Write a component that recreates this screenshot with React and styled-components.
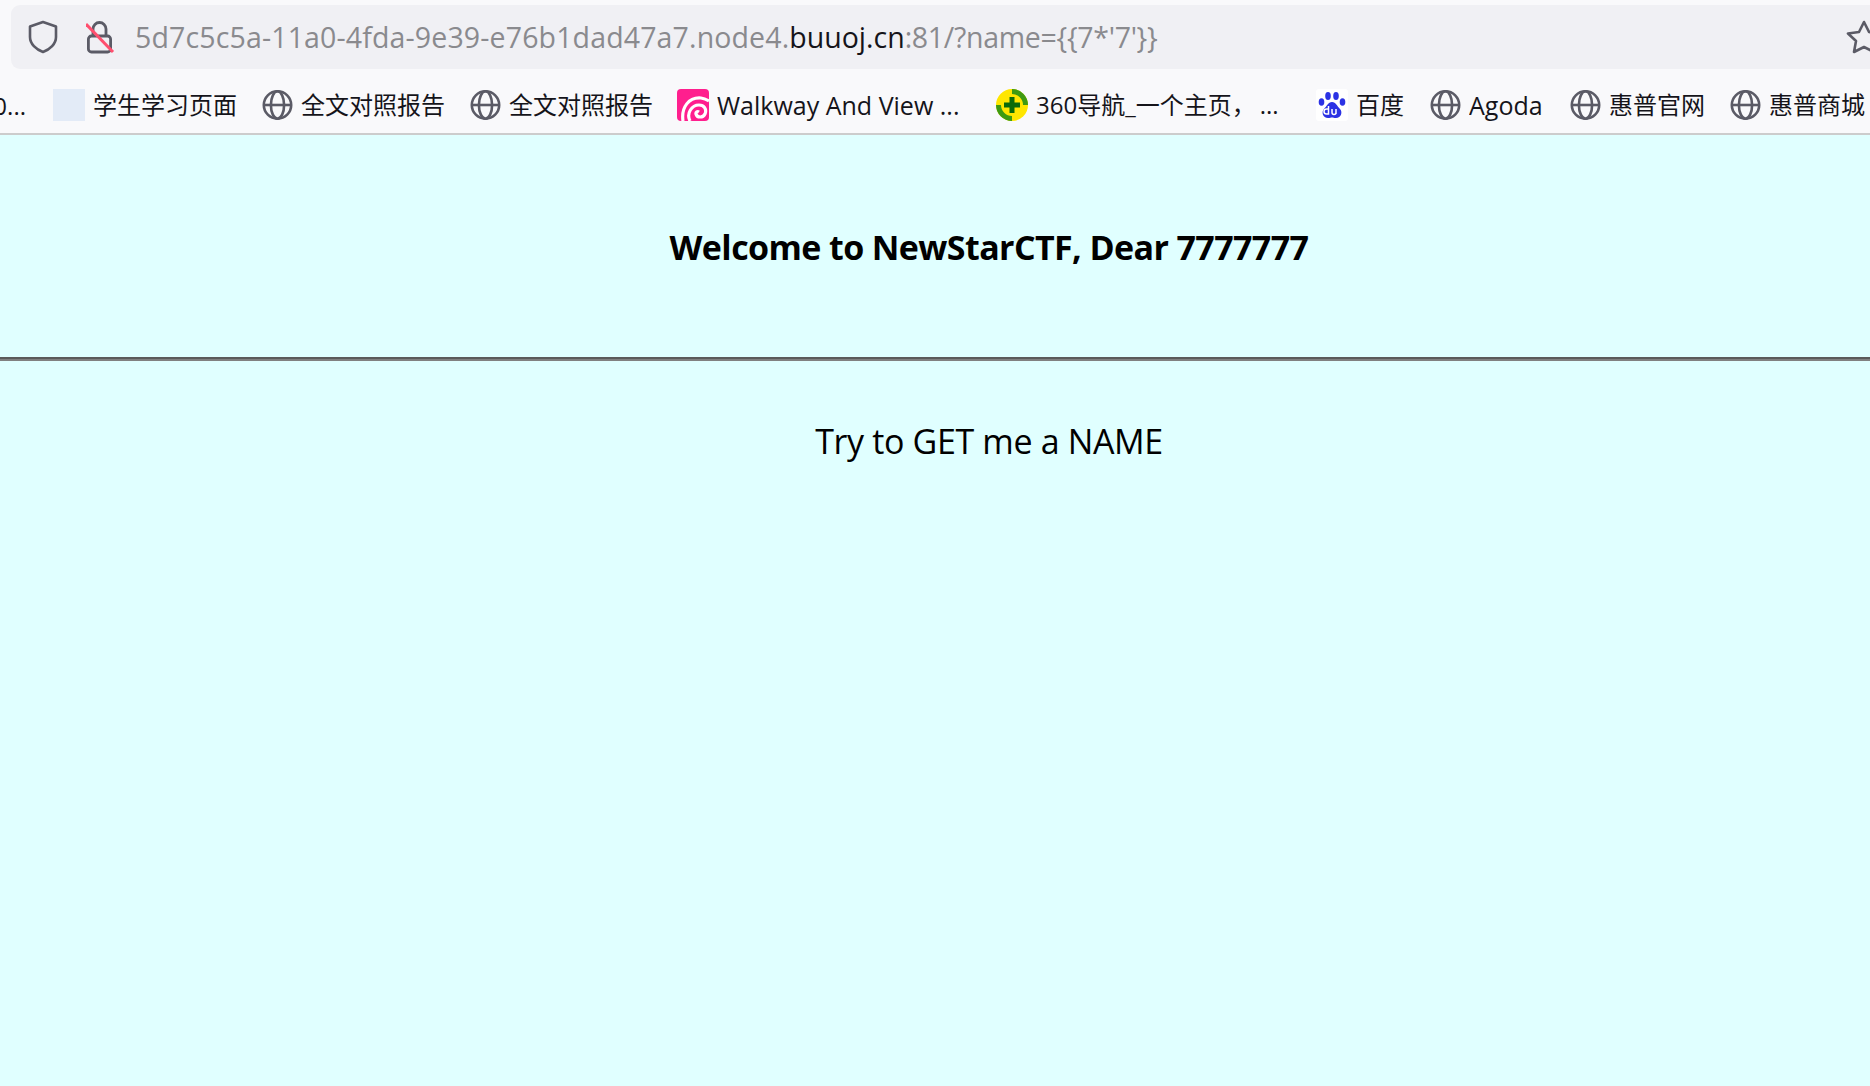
import React from "react";
import styled, { createGlobalStyle } from "styled-components";

const Global = createGlobalStyle`
  html, body { margin: 0; padding: 0; height: 100%; overflow: hidden; background: #e0ffff; }
  #root { height: 1086px; width: 1870px; overflow: hidden; }
  * { box-sizing: border-box; }
`;

const Page = styled.div`
  display: flex; flex-direction: column; height: 1086px; width: 1870px;
  font-family: "Open Sans", "Noto Sans CJK SC", sans-serif;
`;
const Chrome = styled.header`
  background: #f9f9fb; height: 135px; border-bottom: 2px solid #ccc;
  padding-top: 5px; display: flex; flex-direction: column; overflow: hidden;
`;
const UrlBar = styled.div`
  height: 64px; margin-left: 11px; background: #f0f0f4; border-radius: 9px 0 0 9px;
  display: flex; align-items: center; padding-left: 16px; position: relative;
`;
const LockSlot = styled.span`display: flex; margin-left: 27px; margin-right: 19px;`;
const Url = styled.div`
  font-size: 28.5px; color: #8a8a8e; white-space: nowrap; font-family: "Open Sans", sans-serif;
`;
const UrlPart = styled.span`
  letter-spacing: ${p => p.$ls}px;
  color: ${p => (p.$host ? "#15141a" : "#8a8a8e")};
`;
const StarSlot = styled.span`position: absolute; left: 1835px; top: 15px; display: flex;`;
const Bookmarks = styled.nav`
  height: 32px; margin-top: 20px; display: flex; align-items: center; gap: 24px;
`;
const Overflowed = styled.span`
  width: 29px; padding-right: 3px; display: flex; justify-content: flex-end; font-size: 24px; color: #15141a; overflow: hidden; white-space: nowrap;
`;
const Item = styled.div`display: flex; align-items: center; gap: 8px; white-space: nowrap; flex: none;`;
const Label = styled.span`
  font-size: ${p => p.$size || 24}px; line-height: 32px; color: #15141a; width: ${p => p.$w}px; overflow: hidden; white-space: nowrap;
`;
const Square = styled.span`width: 32px; height: 32px; background: #e3ebf7; flex: none;`;
const Main = styled.main`flex: 1; background: #e0ffff; display: flex; flex-direction: column; color: #000;`;
const Heading = styled.h1`
  margin: 0; height: 222px; padding: 89px 0 0 108px; text-align: center; font-size: 34px; line-height: 46px; font-weight: 700;
  letter-spacing: -0.6px;
`;
const Rule = styled.hr`
  margin: 0; height: 4px; border: 0; border-top: 2px solid #5a5a5a; border-bottom: 2px solid #808080;
`;
const Message = styled.p`
  margin: 0; padding: 57px 0 0 108px; text-align: center; font-size: 34px; line-height: 46px; letter-spacing: -0.36px;
`;

const Globe = () => (
  <svg width="32" height="32" viewBox="0 0 32 32" fill="none" stroke="#5b5b66" strokeWidth="2.6">
    <circle cx="16.500" cy="16" r="13.700" />
    <ellipse cx="16.500" cy="16" rx="6.600" ry="13.700" />
    <path d="M2.800 16h27.400" />
  </svg>
);
const Shield = () => (
  <svg width="32" height="34" viewBox="0 0 32 34" fill="none" stroke="#5b5b66" strokeWidth="2.6" strokeLinejoin="round">
    <path d="M16 2 L29 6.5 V17 C29 24 23 29.5 16 32 C9 29.5 3 24 3 17 V6.5 Z" />
  </svg>
);
const Lock = () => (
  <svg width="30" height="34" viewBox="0 0 30 34" fill="none">
    <rect x="2.400" y="16" width="22.200" height="16" rx="3" stroke="#5b5b66" strokeWidth="2.800" />
    <path d="M7 16V9a6.500 6.500 0 0 1 13 0v7" stroke="#5b5b66" strokeWidth="2.800" />
    <path d="M0 4 L27 32" stroke="#ff4f6e" strokeWidth="3" />
  </svg>
);
const Star = () => (
  <svg width="36" height="34" viewBox="0 0 36 34" fill="none" stroke="#5b5b66" strokeWidth="2.6" strokeLinejoin="round">
    <path d="M18 2 L23 12 L34 13.5 L26 21 L28 32 L18 27 L8 32 L10 21 L2 13.5 L13 12 Z" />
  </svg>
);
const Spiral = () => (
  <svg width="32" height="32" viewBox="0 0 32 32">
    <rect width="32" height="32" rx="4" fill="#ff1f8e" />
    <path d="M6 32 C4 18 12 8 24 9 C28 9.500 32 12 32 12 M13 32 C9 24 15 16 22 16 C27 16 30 20 28 25 C26 29 20 29 19 25 C18.500 23 20.500 22 22 23" fill="none" stroke="#fff" strokeWidth="3.200" />
  </svg>
);
const Nav360 = () => (
  <svg width="32" height="32" viewBox="0 0 32 32">
    <circle cx="16" cy="16" r="16" fill="#ffe600" />
    <path d="M16 0a16 16 0 0 1 16 16h-5a11 11 0 0 0-11-11Z" fill="#3e9a12" />
    <path d="M16 32a16 16 0 0 1-16-16h5a11 11 0 0 0 11 11Z" fill="#3e9a12" />
    <path d="M13.500 8h5v5.500h5.500v5h-5.500V24h-5v-5.500H8v-5h5.500Z" fill="#0a6a0a" />
  </svg>
);
const Baidu = () => (
  <svg width="32" height="32" viewBox="0 0 32 32" fill="#2b32e4">
    <rect width="32" height="32" rx="3" fill="#fff" />
    <ellipse cx="5.500" cy="13" rx="2.800" ry="3.800" />
    <ellipse cx="12" cy="7" rx="2.800" ry="4" />
    <ellipse cx="20" cy="7" rx="2.800" ry="4" />
    <ellipse cx="26.500" cy="13" rx="2.800" ry="3.800" />
    <path d="M16 13c-4 0-5 4-8 7-3 3-1 9 4 9 2 0 3-.6 4-.6s2 .6 4 .6c5 0 7-6 4-9-3-3-4-7-8-7Z" />
    <path d="M12.500 17v8h-2a2.500 2.500 0 0 1 0-5h2M16 20v3.500a2 2 0 0 0 4 0V20M20 20v5" fill="none" stroke="#fff" strokeWidth="1.500" />
  </svg>
);

const Bookmark = ({ icon, w, size, children }) => (
  <Item>{icon}<Label $w={w} $size={size}>{children}</Label></Item>
);

export default function App() {
  return (
    <Page>
      <Global />
      <Chrome>
        <UrlBar>
          <Shield />
          <LockSlot><Lock /></LockSlot>
          <Url>
            <UrlPart $ls={0.14}>5d7c5c5a-11a0-4fda-9e39-e76b1dad47a7.node4.</UrlPart>
            <UrlPart $ls={0} $host>buuoj.cn</UrlPart>
            <UrlPart $ls={-0.3}>:81/?name={"{{7*'7'}}"}</UrlPart>
          </Url>
          <StarSlot><Star /></StarSlot>
        </UrlBar>
        <Bookmarks>
          <Overflowed>0...</Overflowed>
          <Bookmark icon={<Square />} w={144}>学生学习页面</Bookmark>
          <Bookmark icon={<Globe />} w={144}>全文对照报告</Bookmark>
          <Bookmark icon={<Globe />} w={144}>全文对照报告</Bookmark>
          <Bookmark icon={<Spiral />} w={255} size={25}>Walkway And View ...</Bookmark>
          <Bookmark icon={<Nav360 />} w={256}>360导航_一个主页，{"\u2009"}...</Bookmark>
          <Bookmark icon={<Baidu />} w={49}>百度</Bookmark>
          <Bookmark icon={<Globe />} w={76} size={25}>Agoda</Bookmark>
          <Bookmark icon={<Globe />} w={96}>惠普官网</Bookmark>
          <Bookmark icon={<Globe />} w={96}>惠普商城</Bookmark>
        </Bookmarks>
      </Chrome>
      <Main>
        <Heading>Welcome to NewStarCTF, Dear 7777777</Heading>
        <Rule />
        <Message>Try to GET me a NAME</Message>
      </Main>
    </Page>
  );
}
